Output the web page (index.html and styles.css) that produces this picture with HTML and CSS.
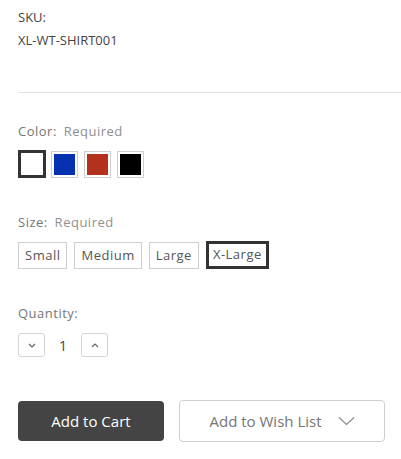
FILE: index.html
```html
<!DOCTYPE html>
<html>
<head>
<meta charset="utf-8">
<link rel="stylesheet" href="styles.css">
</head>
<body>
<div class="page">
  <dl class="sku">
    <dt>SKU:</dt>
    <dd>XL-WT-SHIRT001</dd>
  </dl>
  <hr class="divider">
  <div class="field field-color">
    <div class="label">Color: <span class="req">Required</span></div>
    <div class="swatches">
      <span class="swatch selected"><span class="fill" style="background:#ffffff"></span></span>
      <span class="swatch"><span class="fill" style="background:#0530b0"></span></span>
      <span class="swatch"><span class="fill" style="background:#b2321d"></span></span>
      <span class="swatch"><span class="fill" style="background:#000000"></span></span>
    </div>
  </div>
  <div class="field field-size">
    <div class="label">Size: <span class="req">Required</span></div>
    <div class="sizes">
      <span class="size">Small</span>
      <span class="size">Medium</span>
      <span class="size">Large</span>
      <span class="size selected">X-Large</span>
    </div>
  </div>
  <div class="field field-qty">
    <div class="label">Quantity:</div>
    <div class="qty">
      <button class="qbtn"><svg width="8" height="5" viewBox="0 0 8 5"><path d="M1 1l3 3 3-3" fill="none" stroke="#666" stroke-width="1.2"/></svg></button>
      <span class="qval">1</span>
      <button class="qbtn"><svg width="8" height="5" viewBox="0 0 8 5"><path d="M1 4l3-3 3 3" fill="none" stroke="#666" stroke-width="1.2"/></svg></button>
    </div>
  </div>
  <div class="actions">
    <button class="btn btn-cart">Add to Cart</button>
    <button class="btn btn-wish">Add to Wish List <svg class="chev" width="17" height="10" viewBox="0 0 17 10"><path d="M1 1.5l7.5 7 7.5-7" fill="none" stroke="#8a8a8a" stroke-width="1.2"/></svg></button>
  </div>
</div>
</body>
</html>
```
FILE: styles.css
```css
html, body {
  margin: 0;
  padding: 0;
  background: #fff;
}
.page {
  padding: 6px 0 0 18px;
  font-family: "Open Sans", sans-serif;
  color: #545454;
}
.sku {
  margin: 0;
  font-size: 13px;
  line-height: 23px;
  color: #444;
}
.sku dt, .sku dd {
  margin: 0;
}
.divider {
  border: 0;
  border-top: 1px solid #e3e3e3;
  margin: 40px 0 0 0;
}
.label {
  font-size: 13px;
  line-height: 18px;
  color: #757575;
  letter-spacing: 0.5px;
}
.req {
  margin-left: 3px;
  color: #8f8f8f;
}
.field-color {
  padding-top: 29px;
}
.swatches {
  display: flex;
  gap: 6px;
  margin-top: 11px;
}
.swatch {
  box-sizing: border-box;
  width: 27px;
  height: 27px;
  border: 1px solid #cfcfcf;
  padding: 2px;
  display: block;
}
.swatch.selected {
  width: 28px;
  height: 28px;
  margin-top: -1px;
  margin-right: -1px;
  border: 3px solid #333;
  padding: 0;
}
.swatch .fill {
  display: block;
  width: 100%;
  height: 100%;
}
.field-size {
  padding-top: 35px;
}
.sizes {
  display: flex;
  gap: 7px;
  margin-top: 11px;
}
.size {
  box-sizing: border-box;
  height: 27px;
  line-height: 25px;
  padding: 0 6px;
  border: 1px solid #cfcfcf;
  font-size: 13px;
  color: #555;
  letter-spacing: 0.5px;
}
.size.selected {
  border: 3px solid #333;
  line-height: 21px;
  padding: 0 4px;
  margin-top: -1px;
  height: 28px;
}
.field-qty {
  padding-top: 35px;
}
.qty {
  display: flex;
  align-items: center;
  margin-top: 11px;
}
.qbtn {
  box-sizing: border-box;
  width: 27px;
  height: 24px;
  border: 1px solid #d5d5d5;
  border-radius: 3px;
  background: #fff;
  padding: 0;
  display: flex;
  align-items: center;
  justify-content: center;
}
.qval {
  width: 36px;
  text-align: center;
  font-size: 14px;
  color: #444;
}
.actions {
  display: flex;
  align-items: center;
  gap: 15px;
  margin-top: 43px;
}
.btn {
  box-sizing: border-box;
  font-family: "Open Sans", sans-serif;
  font-size: 15px;
  border-radius: 4px;
  padding: 0;
  display: flex;
  align-items: center;
  justify-content: center;
}
.btn-cart {
  width: 146px;
  height: 40px;
  background: #444;
  color: #fff;
  border: 0;
}
.btn-wish {
  width: 206px;
  height: 42px;
  background: #fff;
  color: #757575;
  border: 1px solid #cfcfcf;
}
.chev {
  margin-left: 16px;
}
```
